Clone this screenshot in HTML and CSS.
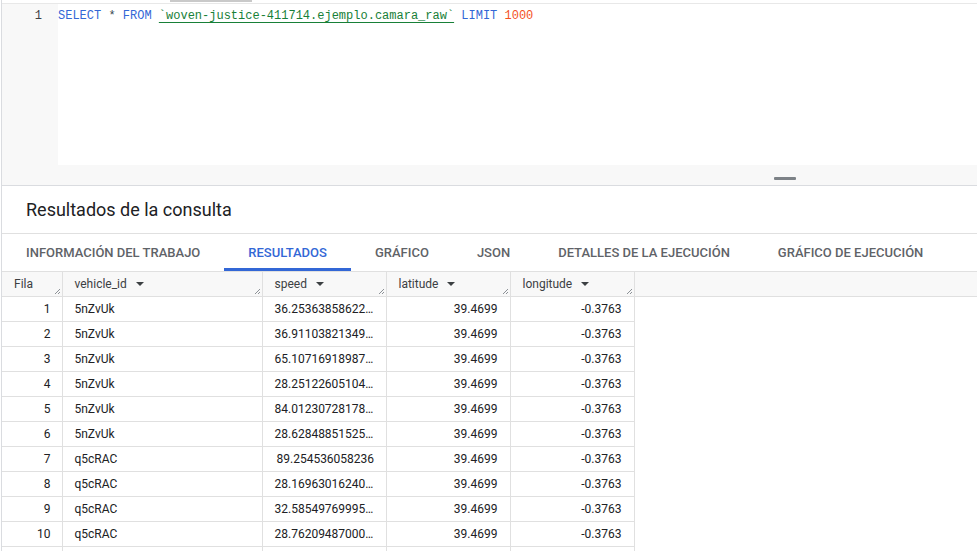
FILE: index.html
```html
<!DOCTYPE html>
<html lang="es">
<head>
<meta charset="utf-8">
<title>Consulta</title>
<link rel="stylesheet" href="styles.css">
</head>
<body>
<div class="app">
  <div class="editor">
    <div class="topbar"><div class="thumb"></div></div>
    <div class="code-area">
      <div class="gutter"><span class="ln">1</span></div>
      <div class="code"><span class="kw">SELECT</span> <span class="op">*</span> <span class="kw">FROM</span> <span class="str">`woven-justice-411714.ejemplo.camara_raw`</span> <span class="kw">LIMIT</span> <span class="num">1000</span></div>
    </div>
    <div class="resize"><div class="handle"></div></div>
  </div>
  <div class="results-title">Resultados de la consulta</div>
  <div class="tabs">
    <div class="tab">INFORMACIÓN DEL TRABAJO</div>
    <div class="tab active">RESULTADOS</div>
    <div class="tab">GRÁFICO</div>
    <div class="tab">JSON</div>
    <div class="tab">DETALLES DE LA EJECUCIÓN</div>
    <div class="tab">GRÁFICO DE EJECUCIÓN</div>
  </div>
  <table class="grid">
    <colgroup>
      <col class="c-fila"><col class="c-vid"><col class="c-num"><col class="c-num"><col class="c-num"><col>
    </colgroup>
    <thead>
      <tr>
        <th>Fila<svg class="grip" viewBox="0 0 8 8"><path d="M7 2L2 7M7 5L5 7" stroke="#80868b" stroke-width="0.9"/></svg></th>
        <th>vehicle_id<span class="arr"></span><svg class="grip" viewBox="0 0 8 8"><path d="M7 2L2 7M7 5L5 7" stroke="#80868b" stroke-width="0.9"/></svg></th>
        <th>speed<span class="arr"></span><svg class="grip" viewBox="0 0 8 8"><path d="M7 2L2 7M7 5L5 7" stroke="#80868b" stroke-width="0.9"/></svg></th>
        <th>latitude<span class="arr"></span><svg class="grip" viewBox="0 0 8 8"><path d="M7 2L2 7M7 5L5 7" stroke="#80868b" stroke-width="0.9"/></svg></th>
        <th>longitude<span class="arr"></span><svg class="grip" viewBox="0 0 8 8"><path d="M7 2L2 7M7 5L5 7" stroke="#80868b" stroke-width="0.9"/></svg></th>
        <th class="filler"></th>
      </tr>
    </thead>
    <tbody>
      <tr><td class="n">1</td><td>5nZvUk</td><td>36.25363858622284</td><td class="r">39.4699</td><td class="r">-0.3763</td><td class="filler"></td></tr>
      <tr><td class="n">2</td><td>5nZvUk</td><td>36.91103821349221</td><td class="r">39.4699</td><td class="r">-0.3763</td><td class="filler"></td></tr>
      <tr><td class="n">3</td><td>5nZvUk</td><td>65.10716918987654</td><td class="r">39.4699</td><td class="r">-0.3763</td><td class="filler"></td></tr>
      <tr><td class="n">4</td><td>5nZvUk</td><td>28.25122605104321</td><td class="r">39.4699</td><td class="r">-0.3763</td><td class="filler"></td></tr>
      <tr><td class="n">5</td><td>5nZvUk</td><td>84.01230728178543</td><td class="r">39.4699</td><td class="r">-0.3763</td><td class="filler"></td></tr>
      <tr><td class="n">6</td><td>5nZvUk</td><td>28.62848851525987</td><td class="r">39.4699</td><td class="r">-0.3763</td><td class="filler"></td></tr>
      <tr><td class="n">7</td><td>q5cRAC</td><td class="sp">89.254536058236</td><td class="r">39.4699</td><td class="r">-0.3763</td><td class="filler"></td></tr>
      <tr><td class="n">8</td><td>q5cRAC</td><td>28.16963016240123</td><td class="r">39.4699</td><td class="r">-0.3763</td><td class="filler"></td></tr>
      <tr><td class="n">9</td><td>q5cRAC</td><td>32.58549769995112</td><td class="r">39.4699</td><td class="r">-0.3763</td><td class="filler"></td></tr>
      <tr><td class="n">10</td><td>q5cRAC</td><td>28.76209487000456</td><td class="r">39.4699</td><td class="r">-0.3763</td><td class="filler"></td></tr>
      <tr><td class="n"></td><td></td><td></td><td class="r"></td><td class="r"></td><td class="filler"></td></tr>
    </tbody>
  </table>
</div>
</body>
</html>
```
FILE: styles.css
```css
* { box-sizing: border-box; }
html, body { margin: 0; padding: 0; background: #fff; }
body {
  font-family: Roboto, "Liberation Sans", Arial, sans-serif;
  color: #202124;
  width: 977px;
  height: 551px;
  overflow: hidden;
}
.app {
  margin-left: 1px;
  border-left: 1px solid #dadce0;
  height: 551px;
  overflow: hidden;
}
.editor {
  background: #f8f8f8;
  border-bottom: 1px solid #dadce0;
}
.topbar {
  height: 4px;
  background: #fff;
  border-bottom: 1px solid #e8e8e8;
}
.thumb {
  margin-left: 168px;
  width: 82px;
  height: 2px;
  background: #c9c9c9;
}
.code-area {
  display: flex;
  height: 161px;
}
.gutter {
  width: 56px;
  background: #f8f8f8;
  text-align: right;
  padding-right: 16px;
  padding-top: 3px;
  font-family: "Liberation Mono", "DejaVu Sans Mono", monospace;
  font-size: 12px;
  line-height: 18px;
  color: #3c4043;
}
.code {
  flex: 1;
  background: #fff;
  padding-top: 3px;
  font-family: "Liberation Mono", "DejaVu Sans Mono", monospace;
  font-size: 12px;
  line-height: 18px;
  color: #37474f;
  white-space: pre;
}
.kw { color: #3367d6; }
.op { color: #37474f; }
.str {
  color: #188038;
  text-decoration: underline;
  text-decoration-color: #188038;
  text-underline-offset: 3px;
}
.num { color: #f4511e; }
.resize {
  height: 20px;
  display: flex;
  justify-content: flex-end;
  align-items: center;
  padding-right: 181px;
  padding-top: 6px;
}
.handle {
  width: 22px;
  height: 3px;
  border-radius: 1px;
  background: #7d8287;
}
.results-title {
  height: 48px;
  border-bottom: 1px solid #e0e0e0;
  padding-left: 24px;
  display: flex;
  align-items: center;
  font-size: 18px;
  color: #202124;
}
.tabs {
  display: flex;
  height: 37px;
}
.tab {
  padding: 0 24px;
  font-size: 13px;
  font-weight: 500;
  color: #5f6368;
  display: flex;
  align-items: center;
  border-bottom: 3px solid transparent;
  padding-top: 3px;
  white-space: nowrap;
}
.tab.active {
  color: #3367d6;
  border-bottom-color: #3367d6;
}
.grid {
  border-collapse: collapse;
  table-layout: fixed;
  width: 975px;
  font-size: 12px;
}
.c-fila { width: 60px; }
.c-vid { width: 200px; }
.c-num { width: 124px; }
.grid th {
  position: relative;
  height: 25px;
  background: #f8f8f8;
  border: 1px solid #e0e0e0;
  border-left: none;
  text-align: left;
  font-weight: 400;
  color: #3c4043;
  padding: 0 12px;
  white-space: nowrap;
}
.grid th.filler { border-right: none; }
.arr {
  display: inline-block;
  width: 0;
  height: 0;
  margin-left: 9px;
  border-left: 4px solid transparent;
  border-right: 4px solid transparent;
  border-top: 4px solid #3c4043;
  vertical-align: 2px;
}
.grip {
  position: absolute;
  right: 1px;
  bottom: 1px;
  width: 8px;
  height: 8px;
}
.grid td {
  height: 25px;
  border-bottom: 1px solid #e0e0e0;
  border-right: 1px solid #e0e0e0;
  padding: 0 12px;
  white-space: nowrap;
  overflow: hidden;
  text-overflow: ellipsis;
  color: #202124;
}
.grid td.n { text-align: right; padding-right: 11px; }
.grid td.r { text-align: right; padding-right: 12px; }
.grid td.sp { padding-left: 14px; padding-right: 0; text-overflow: clip; }
.grid td.filler { border: none; }
```
